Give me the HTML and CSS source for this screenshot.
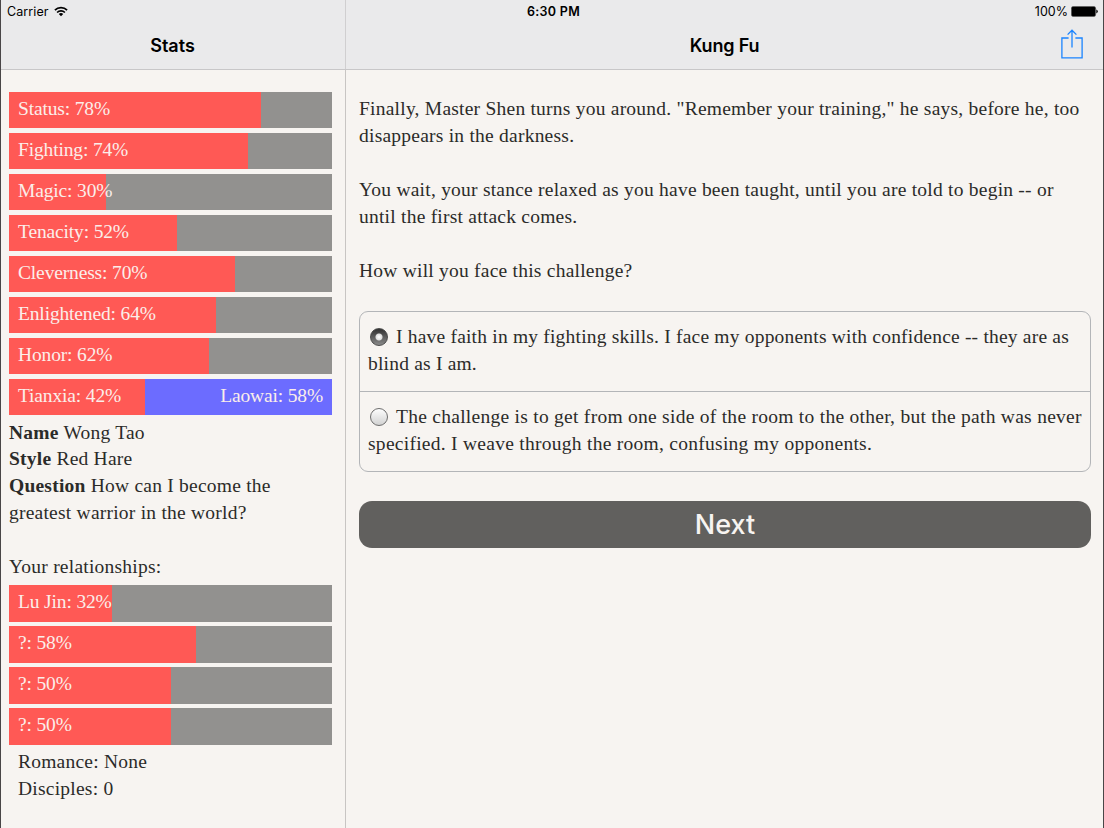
FILE: index.html
```html
<!DOCTYPE html>
<html lang="en">
<head>
    <meta charset="UTF-8">
    <meta name="viewport" content="width=device-width, initial-scale=1.0">
    <title>Kung Fu</title>
    <link rel="stylesheet" href="styles.css">
</head>
<body>
    <header class="top">
        <div class="status">
            <div class="carrier">
                <span>Carrier</span>
                <svg width="14" height="11" viewBox="0 0 14 11" fill="none" stroke="#000" stroke-width="1.7">
                    <path d="M0.9 4.2a8.6 8.6 0 0 1 12.2 0"/>
                    <path d="M3.1 6.5a5.5 5.5 0 0 1 7.8 0"/>
                    <path d="M7 10.2L4.8 8a3.1 3.1 0 0 1 4.4 0z" fill="#000" stroke="none"/>
                </svg>
            </div>
            <div class="clock">6:30 PM</div>
            <div class="power">
                <span>100%</span>
                <svg width="27" height="11" viewBox="0 0 27 11">
                    <rect x="0.4" y="0.4" width="24.2" height="10.2" rx="1.8" fill="#000" stroke="#555" stroke-width="0.6"/>
                    <path d="M25.3 3.6q1.5 0.6 1.5 1.9t-1.5 1.9z"/>
                </svg>
            </div>
        </div>
        <div class="titles">
            <h1 class="title side">Stats</h1>
            <div class="title story">
                <h1>Kung Fu</h1>
                <svg class="share" width="22" height="30" viewBox="0 0 22 30" fill="none" stroke="#1a84ff" stroke-width="1.3">
                    <path d="M7.6 9H0.9V28.8H21.1V9H14.4"/>
                    <path d="M11 18.5V1.6M6.6 5.6L11 1.2L15.4 5.6"/>
                </svg>
            </div>
        </div>
    </header>

    <div class="columns">
        <aside class="stats">
            <div class="bar"><div class="fill" style="width: 78%"></div><span>Status: 78%</span></div>
            <div class="bar"><div class="fill" style="width: 74%"></div><span>Fighting: 74%</span></div>
            <div class="bar"><div class="fill" style="width: 30%"></div><span>Magic: 30%</span></div>
            <div class="bar"><div class="fill" style="width: 52%"></div><span>Tenacity: 52%</span></div>
            <div class="bar"><div class="fill" style="width: 70%"></div><span>Cleverness: 70%</span></div>
            <div class="bar"><div class="fill" style="width: 64%"></div><span>Enlightened: 64%</span></div>
            <div class="bar"><div class="fill" style="width: 62%"></div><span>Honor: 62%</span></div>
            <div class="bar opposed"><div class="fill" style="width: 42%"></div><span>Tianxia: 42%</span><span>Laowai: 58%</span></div>
            <p><b>Name</b> Wong Tao</p>
            <p><b>Style</b> Red Hare</p>
            <p><b>Question</b> How can I become the<br>greatest warrior in the world?</p>
            <p class="relations">Your relationships:</p>
            <div class="bar"><div class="fill" style="width: 32%"></div><span>Lu Jin: 32%</span></div>
            <div class="bar"><div class="fill" style="width: 58%"></div><span>?: 58%</span></div>
            <div class="bar"><div class="fill" style="width: 50%"></div><span>?: 50%</span></div>
            <div class="bar"><div class="fill" style="width: 50%"></div><span>?: 50%</span></div>
            <p class="indent">Romance: None</p>
            <p class="indent">Disciples: 0</p>
        </aside>

        <main class="page">
            <p>Finally, Master Shen turns you around. "Remember your training," he says, before he, too<br>disappears in the darkness.</p>
            <p>You wait, your stance relaxed as you have been taught, until you are told to begin -- or<br>until the first attack comes.</p>
            <p>How will you face this challenge?</p>
            <div class="choices">
                <label><input type="radio" name="choice" checked>I have faith in my fighting skills. I face my opponents with confidence -- they are as<br>blind as I am.</label>
                <label><input type="radio" name="choice">The challenge is to get from one side of the room to the other, but the path was never<br>specified. I weave through the room, confusing my opponents.</label>
            </div>
            <button class="next">Next</button>
        </main>
    </div>
</body>
</html>
```
FILE: styles.css
```css
* {
    box-sizing: border-box;
}

body {
    margin: 0;
    height: 828px;
    overflow: hidden;
    display: flex;
    flex-direction: column;
    background-color: #f7f4f1;
    border-left: 1px solid #494647;
    border-right: 1px solid #494647;
    color: #2b2b29;
    font-family: "Liberation Serif", serif;
    font-size: 19.5px;
    line-height: 26.9px;
}

p {
    margin: 0;
    white-space: nowrap;
    letter-spacing: 0.23px;
}

.top {
    height: 70px;
    flex: none;
    /* divider between the two panes runs up through the status bar */
    background: linear-gradient(#d0cfd0, #d0cfd0) 344px 0 / 1px 100% no-repeat #eaeaeb;
    border-bottom: 1px solid #c8c7c8;
    color: #000;
    font-family: Inter, sans-serif;
}

.status {
    display: grid;
    grid-template-columns: 1fr auto 1fr;
    height: 23px;
    padding: 0 5px 0 6px;
    font-size: 12.5px;
    line-height: 23px;
}

.carrier, .power {
    display: flex;
    align-items: center;
    gap: 5px;
}

.carrier {
    letter-spacing: 0.1px;
}

.power {
    justify-content: flex-end;
    gap: 3px;
}

.clock {
    padding-left: 2px;
    font-weight: 600;
    letter-spacing: 0.3px;
}

.titles {
    display: flex;
    height: 46px;
}

.title, .title h1 {
    margin: 0;
    font-size: 18px;
    font-weight: 600;
    line-height: 46px;
    text-align: center;
}

.side {
    width: 343px;
}

.story {
    display: grid;
    grid-template-columns: 22px 1fr 22px;
    flex: 1;
    padding: 0 20px 0 22px;
}

.story h1 {
    grid-column: 2;
    letter-spacing: -0.2px;
}

.share {
    margin-top: 6px;
}

.columns {
    display: flex;
    flex: 1;
}

.stats {
    width: 345px;
    padding: 22px 13px 0 8px;
    border-right: 1px solid #c8c5c3;
}

.bar {
    display: grid;
    grid-template-columns: 1fr auto;
    height: 36.4px;
    margin-bottom: 4.55px;
    background-color: #92918f;
    color: #fbeeea;
    line-height: 33px;
    letter-spacing: -0.15px;
}

.bar > * {
    grid-row: 1;
}

.bar span {
    padding: 0 9px;
    grid-column: 1;
}

.bar .fill {
    grid-column: 1 / 3;
    background-color: #ff5955;
}

.opposed {
    background-color: #6c6cff;
}

.opposed span:last-child {
    grid-column: 2;
}

.relations {
    margin: 26.9px 0 4.55px;
}

.indent {
    padding-left: 9px;
}

.page {
    flex: 1;
    padding: 25px 12px 0 13px;
    line-height: 27px;
}

.page p {
    margin-bottom: 27px;
}

.choices {
    margin-bottom: 29.4px;
    border: 1.5px solid #b3b5b8;
    border-radius: 9px;
    letter-spacing: 0.2px;
}

.choices label {
    display: block;
    padding: 11px 8px 14px;
    white-space: nowrap;
}

.choices label + label {
    border-top: 1.5px solid #b3b5b8;
    letter-spacing: 0.27px;
}

.choices input {
    appearance: none;
    width: 18px;
    height: 18px;
    margin: 0 8px 0 2px;
    vertical-align: -3px;
    border: 1px solid #6d6d6d;
    border-radius: 50%;
    background: linear-gradient(#fdfdfd, #d2d2d2);
}

.choices input:checked {
    border-color: #4a4a4a;
    background: radial-gradient(circle, #fff 0, #dedede 3px, transparent 4px), linear-gradient(#303030, #8a8a8a);
}

.next {
    display: block;
    width: 100%;
    height: 47px;
    padding: 0;
    border: none;
    border-radius: 13px;
    background-color: #61605e;
    color: #f7f4f1;
    font-family: Inter, sans-serif;
    font-size: 27px;
    font-weight: 500;
}
```
